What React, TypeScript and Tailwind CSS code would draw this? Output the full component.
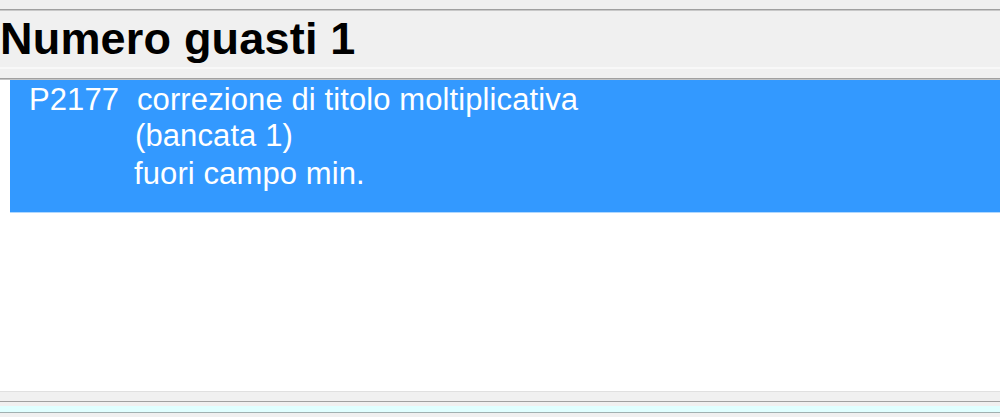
export default function App() {
  return (
    <div className="w-[1000px] h-[417px] overflow-hidden bg-white flex flex-col font-['Liberation_Sans',Arial,sans-serif]">
      {/* top strip */}
      <div className="h-[9px] bg-[#f0f0f0]" />
      <div className="h-px bg-[#a0a0a0]" />
      <div className="h-px bg-[#c8c8c8]" />

      {/* header */}
      <div className="h-[56px] bg-[#f0f0f0] flex items-end">
        <h1 className="text-[45px] leading-none font-bold text-black pb-[6px] tracking-[0.2px]">Numero guasti 1</h1>
      </div>
      <div className="h-[2px] bg-[#f8f8f8]" />
      <div className="h-[9px] bg-[#f0f0f0]" />
      <div className="h-px bg-[#a0a0a0]" />
      <div className="h-px bg-[#c4c4c4]" />

      {/* fault list */}
      <div className="flex-1 bg-white pl-[10px]">
        <div className="bg-[#3399ff] h-[133px] flex text-white text-[31px] leading-[36px] pt-[2px] tracking-[0.1px] border-b border-[#b0d8ff]">
          <div className="w-[127px] pl-[19px]">P2177</div>
          <div className="flex flex-col">
            <span>correzione di titolo moltiplicativa</span>
            <span className="-ml-[2px]">(bancata 1)</span>
            <span className="-ml-[3px] pt-[2px]">fuori campo min.</span>
          </div>
        </div>
      </div>

      {/* bottom bars */}
      <div className="h-px bg-[#e0e0e0]" />
      <div className="h-[9px] bg-[#f0f0f0]" />
      <div className="h-px bg-[#a0a0a0]" />
      <div className="h-[4px] bg-[#f0f0f0]" />
      <div className="h-[6px] bg-[#e0ffff]" />
      <div className="h-px bg-[#a0b0b0]" />
      <div className="h-[4px] bg-[#f0f0f0]" />
    </div>
  );
}
